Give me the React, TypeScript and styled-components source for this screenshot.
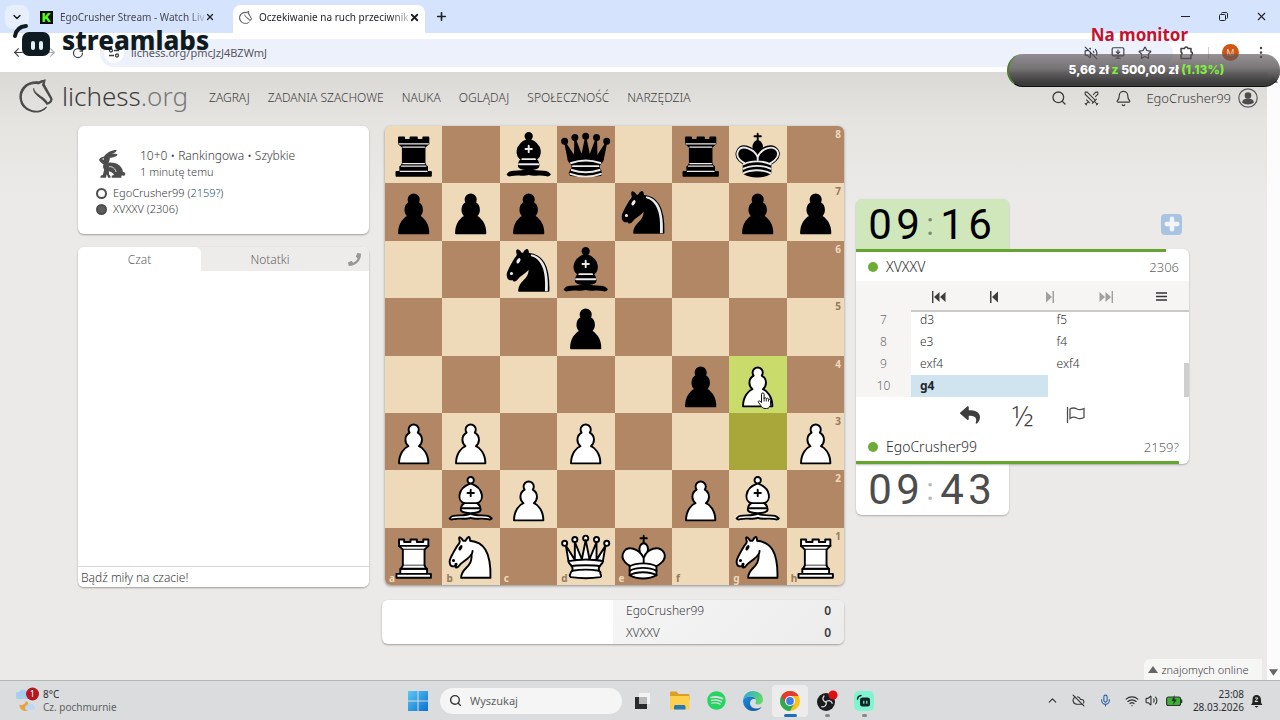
import React from 'react';
import styled, { createGlobalStyle } from 'styled-components';
import { Bell, ChevronDown, ChevronUp, CloudOff, Mic, MonitorDown, Search, Star, Swords, Volume2, VolumeOff, Wifi, X, Plus, ArrowLeft, ArrowRight, RotateCw } from 'lucide-react';
import { FaPhone, FaReply, FaSpotify } from 'react-icons/fa';

const Global = createGlobalStyle`
  * { box-sizing: border-box; }
  body { margin: 0; font-family: 'Noto Sans', sans-serif; font-size: 12px; font-weight: 300; color: #3d3d3d; }
  button { border: 0; padding: 0; background: none; color: inherit; font: inherit; display: flex; align-items: center; justify-content: center; }
  a { color: inherit; text-decoration: none; }
  svg { display: block; flex: none; }
`;

const Screen = styled.div`
  position: relative;
  min-height: 100vh;
  display: flex;
  flex-direction: column;
  overflow: hidden;
`;

/* ---------- browser ---------- */
const TabStrip = styled.div`
  height: 33px;
  display: flex;
  align-items: flex-end;
  padding-left: 5px;
  background: #d6e3fc;
  color: #1f2024;
`;
const TabSearch = styled.button`
  width: 24px;
  height: 24px;
  margin-bottom: 4px;
  border-radius: 8px;
  background: #e7effd;
`;
const Tab = styled.div<{ $active?: boolean }>`
  display: flex;
  align-items: center;
  width: ${p => (p.$active ? 192 : 194)}px;
  height: 28px;
  padding: 0 8px 4px ${p => (p.$active ? 6 : 11)}px;
  margin-left: ${p => (p.$active ? 10 : 0)}px;
  border-radius: 8px 8px 0 0;
  background: ${p => (p.$active ? '#fff' : 'transparent')};
`;
const TabTitle = styled.span<{ $active?: boolean }>`
  flex: 1;
  margin-left: 7px;
  white-space: nowrap;
  font-size: 10px;
  font-weight: 400;
  line-height: 16px;
  color: ${p => (p.$active ? '#1f2024' : '#44474e')};
  mask-image: linear-gradient(90deg, #000 88%, #0003);
`;
const KickMark = styled.span`
  width: 13px;
  height: 13px;
  background: #0a0a0a;
  color: #53fc18;
  font: 900 12px/13px Inter, sans-serif;
  text-align: center;
`;
const NewTab = styled.button`
  width: 32px;
  height: 33px;
`;
const WindowButtons = styled.div`
  display: flex;
  margin-left: auto;
  height: 33px;
  button { width: 38px; }
`;
const Toolbar = styled.div`
  height: 39px;
  display: flex;
  align-items: center;
  padding: 0 6px 0 8px;
  background: #fff;
  color: #3c3f44;
`;
const NavButton = styled.button<{ $dim?: boolean }>`
  width: 20px;
  height: 24px;
  margin-right: ${p => (p.$dim ? 8 : 12)}px;
  color: ${p => (p.$dim ? '#a9abb0' : '#3c3f44')};
`;
const AddressBar = styled.label`
  flex: 1;
  display: flex;
  align-items: center;
  height: 28px;
  padding: 0 15px 0 4px;
  border-radius: 14px;
  background: #edf1fb;
`;
const SiteInfo = styled.button`
  width: 20px;
  height: 20px;
  border-radius: 50%;
  background: #fff;
`;
const Url = styled.input`
  flex: 1;
  border: 0;
  outline: 0;
  padding: 0 0 0 7px;
  background: none;
  font: 11px/16px 'Noto Sans', sans-serif;
  color: #55575c;
`;
const BarIcon = styled.button`
  width: 27px;
  height: 24px;
`;
const ToolDivider = styled.span`
  width: 1px;
  height: 12px;
  margin: 0 13px 0 8px;
  background: #c9cfdb;
`;
const Avatar = styled.button`
  width: 17px;
  height: 17px;
  margin-right: 8px;
  border-radius: 50%;
  background: #cf5613;
  color: #fff;
  font-size: 9px;
`;

/* ---------- stream overlays ---------- */
const StreamlabsMark = styled.div`
  position: absolute;
  left: 12px;
  top: 22px;
  display: flex;
  align-items: center;
  gap: 11px;
  color: #101b21;
  font-size: 26px;
  font-weight: 800;
  line-height: 36px;
`;
const GoalTitle = styled.div`
  position: absolute;
  right: 92px;
  top: 24px;
  color: #c4122f;
  font-size: 17px;
  font-weight: 700;
  line-height: 22px;
`;
const GoalBar = styled.div`
  position: absolute;
  right: 0;
  top: 54px;
  width: 273px;
  height: 33px;
  padding-left: 4px;
  border-radius: 16px;
  border-left: 2px solid #4f7f2a;
  border-bottom: 1px solid #111;
  background: linear-gradient(#5a5054a0, #5f5b5cd0 40%, #3b3b3b 90%);
  color: #fff;
  font: 800 12px/32px Inter, sans-serif;
  text-align: center;
  em { font-style: normal; color: #80f03c; }
`;

/* ---------- lichess page ---------- */
const Viewport = styled.div`
  flex: 1;
  display: flex;
`;
const Page = styled.div`
  position: relative;
  flex: 1;
  background: linear-gradient(#dbd9d5, #e5e4e1 50px, #ebeae8 130px, #ebeae8);
`;
const ScrollTrack = styled.div`
  width: 13px;
  padding: 4px 2px;
  display: flex;
  flex-direction: column;
  justify-content: space-between;
  align-items: center;
  background: #fcfcfc;
`;
const SiteHeader = styled.header`
  height: 54px;
  padding: 0 9px 2px 19px;
  display: flex;
  align-items: center;
`;
const Brand = styled.a`
  display: flex;
  align-items: center;
  gap: 9px;
  width: 190px;
  padding-bottom: 4px;
  color: #3d3d3d;
  font-size: 26px;
  line-height: 36px;
  span { color: #777; }
`;
const SiteNav = styled.nav`
  display: flex;
  gap: 18px;
  font-size: 12px;
  line-height: 20px;
`;
const UserTools = styled.div`
  display: flex;
  align-items: center;
  margin-left: auto;
  button { width: 32px; height: 24px; }
`;
const UserLink = styled.a`
  display: flex;
  align-items: center;
  gap: 7px;
  margin-left: 7px;
  line-height: 20px;
  font-size: 13px;
`;
const Round = styled.main`
  display: flex;
  align-items: flex-start;
  padding: 0 78px 36px;
`;
const Side = styled.aside`
  flex: 291 1 0;
  min-width: 0;
  display: flex;
  flex-direction: column;
  gap: 13px;
`;
const BoardColumn = styled.section`
  flex: 459 1 0;
  min-width: 0;
  margin: 0 12px 0 16px;
`;
const Table = styled.section`
  flex: 333 1 0;
  min-width: 0;
  margin-top: 73px;
`;
const Card = styled.div`
  background: #fff;
  border-radius: 6px;
  box-shadow: 0 1px 2px #0005;
`;
const GameMeta = styled(Card)`
  height: 108px;
  padding: 19px 20px 0 18px;
`;
const GameHead = styled.div`
  display: flex;
  align-items: center;
  gap: 14px;
  height: 37px;
  padding-left: 3px;
  line-height: 16px;
  font-size: 12px;
`;
const HeadLines = styled.div`
  display: flex;
  flex-direction: column;
  small { font-size: 11px; }
`;
const MetaPlayer = styled.div`
  display: flex;
  align-items: center;
  gap: 6px;
  line-height: 16px;
  font-size: 11px;
  a { color: #1f5676; }
`;
const ColorDot = styled.i<{ $filled?: boolean }>`
  width: 11px;
  height: 11px;
  border-radius: 50%;
  border: 2px solid #4d4d4d;
  background: ${p => (p.$filled ? '#5d5d5d' : '#fff')};
`;
const MetaPlayers = styled.div`
  padding-top: 3px;
`;
const Chat = styled(Card)`
  height: 340px;
  display: flex;
  flex-direction: column;
  overflow: hidden;
`;
const ChatTabs = styled.div`
  display: flex;
  height: 24px;
  background: #edecea;
  color: #666;
`;
const ChatTab = styled.button<{ $active?: boolean }>`
  flex: ${p => (p.$active ? 123 : 138)} 1 0;
  border-radius: 6px 6px 0 0;
  background: ${p => (p.$active ? '#fff' : 'transparent')};
`;
const CallButton = styled.button`
  width: 30px;
  color: #989898;
`;
const ChatLog = styled.div`
  flex: 1;
`;
const ChatInput = styled.input`
  height: 21px;
  border: 0;
  border-top: 1px solid #d9d9d9;
  padding: 0 3px;
  background: #fff;
  font: 300 12px/18px 'Noto Sans', sans-serif;
  &::placeholder { color: #3d3d3d; opacity: 1; }
`;

const Board = styled.div`
  position: relative;
  aspect-ratio: 1;
  display: grid;
  grid-template: repeat(8, 1fr) / repeat(8, 1fr);
  border-radius: 6px;
  overflow: hidden;
  box-shadow: 0 1px 3px #0006;
`;
const Square = styled.div<{ $bg: string; $ink: string }>`
  position: relative;
  min-width: 0;
  min-height: 0;
  background: ${p => p.$bg};
  color: ${p => p.$ink};
  font-size: 10px;
  font-weight: 700;
  line-height: 12px;
  > svg { width: 100%; height: 100%; }
`;
const Rank = styled.span`
  position: absolute;
  top: 2px;
  right: 3px;
`;
const FileLetter = styled.span`
  position: absolute;
  bottom: 1px;
  left: 4px;
`;
const HandCursor = styled.svg`
  position: absolute;
  left: 81%;
  top: 58%;
`;
const Crosstable = styled(Card)`
  display: flex;
  height: 44px;
  margin: 15px 0 0 -3px;
  overflow: hidden;
`;
const Score = styled.table`
  width: 50%;
  margin-left: auto;
  border-collapse: collapse;
  background: linear-gradient(135deg, #f5f5f5, #ececec);
  font-size: 12px;
  line-height: 20px;
  th { padding: 0 13px; font-weight: 300; text-align: left; }
  td { padding: 0 13px; font-weight: 600; text-align: right; }
`;

const ClockRow = styled.div`
  display: flex;
  justify-content: space-between;
  align-items: center;
  padding-right: 7px;
`;
const Clock = styled.div<{ $running?: boolean }>`
  width: 153px;
  height: ${p => (p.$running ? 50 : 51)}px;
  padding-left: 10px;
  display: flex;
  border-radius: ${p => (p.$running ? '6px 6px 0 0' : '0 0 6px 6px')};
  background: ${p => (p.$running ? '#d0e7bb' : '#fff')};
  box-shadow: 0 1px 2px #0004;
  color: ${p => (p.$running ? '#000' : '#4d4d4d')};
  font: 42px/51px Roboto, sans-serif;
`;
const Digit = styled.span`
  width: 28px;
  text-align: center;
`;
const Colon = styled.span`
  width: 16px;
  text-align: center;
  opacity: 0.4;
  font-size: 32px;
`;
const MoreTime = styled.button`
  width: 21px;
  height: 21px;
  border-radius: 4px;
  background: #a9c4e2;
  color: #f2f6fb;
`;
const PlayCard = styled.div`
  position: relative;
  background: #fff;
  border-radius: 0 6px 6px 0;
  box-shadow: 0 1px 2px #0004;
`;
const TimeBar = styled.div<{ $pct: number }>`
  width: ${p => p.$pct}%;
  height: 3px;
  background: #65a52f;
`;
const PlayerRow = styled.div`
  display: flex;
  align-items: center;
  gap: 8px;
  height: 29px;
  padding: 0 10px 0 12px;
  font-size: 14px;
  line-height: 20px;
  color: #2c2c2c;
  i { width: 10px; height: 10px; border-radius: 50%; background: #6aac35; }
  span { margin-left: auto; font-size: 13px; color: #666; }
`;
const MoveNav = styled.div`
  display: flex;
  height: 31px;
  padding-left: 55px;
  background: #f6f5f4;
`;
const NavInner = styled.div`
  flex: 1;
  display: flex;
  border-bottom: 2px solid #c8c8c8;
  button { flex: 1; padding-top: 2px; }
  button:disabled { color: #a0a0a0; }
`;
const MoveScroll = styled.div`
  height: 85px;
  display: flex;
  flex-direction: column;
  justify-content: flex-end;
  overflow: hidden;
  position: relative;
`;
const Thumb = styled.div`
  position: absolute;
  right: 0;
  bottom: 0;
  width: 5px;
  height: 34px;
  background: #cfcfcf;
`;
const Moves = styled.table`
  width: calc(100% - 5px);
  table-layout: fixed;
  border-collapse: collapse;
  font-size: 12px;
  line-height: 22px;
  th { width: 55px; padding: 0; background: #f6f5f4; color: #6c6c6c; font-weight: 300; }
  td { padding: 0 9px; height: 22px; }
`;
const Move = styled.td<{ $current?: boolean }>`
  background: ${p => (p.$current ? '#d0e4f0' : 'transparent')};
  color: ${p => (p.$current ? '#22262a' : '#333')};
  font-weight: ${p => (p.$current ? 700 : 300)};
`;
const GameActions = styled.div`
  display: flex;
  justify-content: center;
  height: 35px;
  button { width: 53px; font-size: 28px; line-height: 34px; }
`;
const Friends = styled.button`
  position: absolute;
  right: 5px;
  bottom: 0;
  width: 118px;
  height: 21px;
  gap: 3px;
  padding-right: 9px;
  border-radius: 6px 0 0 0;
  background: #f6f6f5;
  font-size: 11px;
  line-height: 16px;
`;

/* ---------- taskbar ---------- */
const Taskbar = styled.footer`
  height: 40px;
  display: grid;
  grid-template-columns: 1fr auto 1fr;
  align-items: center;
  border-top: 1px solid #b3b7b9;
  background: #dadcdd;
  color: #2d2f31;
  font-size: 10px;
  font-weight: 400;
  line-height: 13px;
`;
const Weather = styled.div`
  display: flex;
  align-items: center;
  gap: 4px;
  padding-left: 16px;
  div { display: flex; flex-direction: column; }
  small { font-size: 10px; color: #606264; }
`;
const WeatherBadge = styled.span`
  position: relative;
  b { position: absolute; right: 4px; top: 1px; color: #fff; font-size: 9px; font-weight: 400; line-height: 12px; }
`;
const Apps = styled.div`
  display: flex;
  align-items: center;
  gap: 1px;
  padding-left: 2px;
`;
const AppButton = styled.button<{ $open?: boolean; $active?: boolean }>`
  position: relative;
  width: 36px;
  height: 32px;
  background: ${p => (p.$active ? '#ebeceb' : 'transparent')};
  border-radius: 4px;
  &::after {
    content: '';
    position: absolute;
    bottom: 0;
    width: ${p => (p.$active ? 13 : p.$open ? 5 : 0)}px;
    height: 3px;
    border-radius: 2px;
    background: ${p => (p.$active ? '#1f6fb5' : '#86888a')};
  }
`;
const SearchBox = styled.label`
  display: flex;
  align-items: center;
  gap: 8px;
  width: 182px;
  height: 26px;
  margin: 0 1px 0 3px;
  padding: 0 9px;
  border-radius: 13px;
  background: #f5f5f5;
  input { width: 120px; border: 0; outline: 0; padding: 0; background: none; font: 11px/16px 'Noto Sans', sans-serif; }
  input::placeholder { color: #606264; opacity: 1; }
`;
const Tray = styled.div`
  display: flex;
  align-items: center;
  justify-content: flex-end;
  padding-right: 17px;
`;
const TrayIcon = styled.button<{ $w: number }>`
  width: ${p => p.$w}px;
  height: 24px;
`;
const DateTime = styled.div`
  width: 53px;
  text-align: right;
  margin-right: 6px;
`;

/* ---------- chess pieces ---------- */
const BISHOP = [
  'M9 36c3.39-.97 10.11.43 13.5-2 3.39 2.43 10.11 1.03 13.5 2 0 0 1.65.54 3 2-.68.97-1.65.99-3 .5-3.39-.97-10.11.46-13.5-1-3.39 1.46-10.11.03-13.5 1-1.354.49-2.323.47-3-.5 1.354-1.94 3-2 3-2z',
  'M15 32c2.5 2.5 12.5 2.5 15 0 .5-1.5 0-2 0-2 0-2.5-2.5-4-2.5-4 5.5-1.5 6-11.5-5-15.5-11 4-10.5 14-5 15.5 0 0-2.5 1.5-2.5 4 0 0-.5.5 0 2z',
  'M25 8a2.5 2.5 0 1 1-5 0 2.5 2.5 0 1 1 5 0z',
];
const PAWN = 'M22.5 9c-2.21 0-4 1.79-4 4 0 .89.29 1.71.78 2.38C17.33 16.5 16 18.59 16 21c0 2.03.94 3.84 2.41 5.03-3 1.06-7.41 5.55-7.41 13.47h23c0-7.92-4.41-12.41-7.41-13.47 1.47-1.19 2.41-3 2.41-5.03 0-2.41-1.33-4.5-3.28-5.62.49-.67.78-1.49.78-2.38 0-2.21-1.79-4-4-4z';
const QUEEN_BASE = 'M9 26c0 2 1.5 2 2.5 4 1 1.5 1 1 .5 3.5-1.5 1-1.5 2.5-1.5 2.5-1.5 1.5.5 2.5.5 2.5 6.5 1 16.5 1 23 0 0 0 1.5-1 0-2.5 0 0 .5-1.5-1-2.5-.5-2.5-.5-2 .5-3.5 1-2 2.5-2 2.5-4-8.5-1.5-18.5-1.5-27 0z';
const QUEEN_BALLS = [[6, 12], [14, 9], [22.5, 8], [31, 9], [39, 12]];

function Piece({ code }: { code: string }) {
  const black = code === code.toLowerCase();
  const detail = black ? '#ececec' : '#000';
  let art: React.ReactNode = null;
  switch (code.toLowerCase()) {
    case 'p':
      art = <path d={PAWN} />;
      break;
    case 'n':
      art = (
        <>
          <path d="M22 10c10.5 1 16.5 8 16 29H15c0-9 10-6.5 8-21" />
          <path d="M24 18c.38 2.91-5.55 7.37-8 9-3 2-2.82 4.34-5 4-1.042-.94 1.41-3.04 0-3-1 0 .19 1.23-1 2-1 0-4.003 1-4-4 0-2 6-12 6-12s1.89-1.9 2-3.5c-.73-.994-.5-2-.5-3 1-1 3 2.5 3 2.5h2s.78-1.992 2.5-3c1 0 1 3 1 3" />
          <path d="M9.5 25.5a.5.5 0 1 1-1 0 .5.5 0 1 1 1 0zM14.933 15.75a.5 1.5 30 1 1-.866-.5.5 1.5 30 1 1 .866.5z" fill={detail} stroke={detail} />
          {black && <path d="M24.55 10.4l-.45 1.45.5.15c3.15 1 5.65 2.49 7.9 6.75S35.75 29.06 35.25 39l-.05.5h2.25l.05-.5c.5-10.06-.88-16.85-3.25-21.34-2.37-4.49-5.79-6.64-9.19-7.16l-.51-.1z" fill={detail} stroke="none" />}
        </>
      );
      break;
    case 'b':
      art = (
        <>
          {BISHOP.map(d => <path key={d} d={d} />)}
          <path d="M17.5 26h10M15 30h15m-7.5-14.5v5M20 18h5" fill="none" stroke={detail} />
        </>
      );
      break;
    case 'r':
      art = black ? (
        <>
          <path d="M9 39h27v-3H9v3zM12.5 32l1.5-2.5h17l1.5 2.5h-20zM12 36v-4h21v4H12zM14 29.5v-13h17v13H14zM14 16.5L11 14h23l-3 2.5H14zM11 14V9h4v2h5V9h5v2h5V9h4v5H11z" />
          <path d="M12 35.5h21M13 31.5h19M14 29.5h17M14 16.5h17M11 14h23" fill="none" stroke={detail} strokeWidth="1" />
        </>
      ) : (
        <>
          <path d="M9 39h27v-3H9v3zM12 36v-4h21v4H12zM11 14V9h4v2h5V9h5v2h5V9h4v5" />
          <path d="M34 14l-3 3H14l-3-3" />
          <path d="M31 17v12.5H14V17" />
          <path d="M31 29.5l1.5 2.5h-20l1.5-2.5" />
          <path d="M11 14h23" />
        </>
      );
      break;
    case 'q':
      art = (
        <>
          {QUEEN_BALLS.map(([cx, cy]) => <circle key={cx} cx={cx} cy={cy} r={2} />)}
          <path d={black ? 'M9 26c8.5-1.5 21-1.5 27 0l2.5-12.5L31 25l-.3-14.1-5.2 13.6-3-14.5-3 14.5-5.2-13.6L14 25 6.5 13.5 9 26z' : 'M9 26c8.5-1.5 21-1.5 27 0l2-12-7 11V11l-5.5 13.5-3-15-3 15L14 11v14L7 14l2 12z'} />
          <path d={QUEEN_BASE} />
          <path d={black ? 'M11 29a35 35 1 0 1 23 0M12.5 31.5h20M11.5 34.5a35 35 1 0 0 22 0M10.5 37.5a35 35 1 0 0 24 0' : 'M11.5 30c3.5-1 18.5-1 22 0M12 33.5c6-1 15-1 21 0'} fill="none" stroke={detail} />
        </>
      );
      break;
    case 'k':
      art = (
        <>
          <path d="M22.5 11.63V6M20 8h5" />
          <path d="M22.5 25s4.5-7.5 3-10.5c0 0-1-2.5-3-2.5s-3 2.5-3 2.5c-1.5 3 3 10.5 3 10.5" />
          <path d="M11.5 37c5.5 3.5 15.5 3.5 21 0v-7s9-4.5 6-10.5c-4-6.5-13.5-3.5-16 4V27v-3.5c-3.5-7.5-13-10.5-16-4-3 6 5 10 5 10V37z" />
          {black && <path d="M32 29.5s8.5-4 6.03-9.65C34.15 14 25 18 22.5 24.5l.01 2.1-.01-2.1C20 18 9.906 14 6.997 19.85c-2.497 5.65 4.853 9 4.853 9" fill="none" stroke={detail} />}
          <path d="M11.5 30c5.5-3 15.5-3 21 0m-21 3.5c5.5-3 15.5-3 21 0m-21 3.5c5.5-3 15.5-3 21 0" fill="none" stroke={detail} />
        </>
      );
      break;
  }
  return (
    <svg viewBox="0 0 45 45" fill={black ? '#000' : '#fff'} stroke="#000" strokeWidth="1.5" strokeLinecap="round" strokeLinejoin="round">
      {art}
    </svg>
  );
}

const POSITION = [
  'r.bq.rk.',
  'ppp.n.pp',
  '..nb....',
  '...p....',
  '.....pP.',
  'PP.P...P',
  '.BP..PB.',
  'RN.QK.NR',
];
const LIGHT = '#eed9b8';
const DARK = '#b18765';

function squareColor(r: number, c: number) {
  if (r === 4 && c === 6) return '#c9db6b';
  if (r === 5 && c === 6) return '#a9a63a';
  return (r + c) % 2 ? DARK : LIGHT;
}

function ChessBoard() {
  return (
    <Board>
      {POSITION.flatMap((row, r) =>
        [...row].map((code, c) => (
          <Square key={`${r}${c}`} $bg={squareColor(r, c)} $ink={(r + c) % 2 ? LIGHT : '#977a58'}>
            {code !== '.' && <Piece code={code} />}
            {c === 7 && <Rank>{8 - r}</Rank>}
            {r === 7 && <FileLetter>{'abcdefgh'[c]}</FileLetter>}
          </Square>
        )),
      )}
      <HandCursor width="15" height="18" viewBox="0 0 15 18">
        <path d="M4.5 10.500V2.300a1.300 1.300 0 0 1 2.600 0V7l.2-.8a1.100 1.100 0 0 1 2 .5l.4-.2a1.100 1.100 0 0 1 1.800.8l.5-.1c.9-.1 1.500.5 1.500 1.300v3.500c0 2.500-1.500 4.500-4 4.500H8c-1.800 0-2.800-1-3.600-2.200L1.400 10.400c-.7-1 .6-2 1.500-1.300z" fill="#fff" stroke="#111" strokeWidth="1" strokeLinejoin="round" />
        <path d="M7.100 7v2.500M9.300 7v2.500M11.500 7.500v2" stroke="#111" strokeWidth=".9" />
      </HandCursor>
    </Board>
  );
}

/* ---------- drawings ---------- */
const KNIGHT = 'M38.956.5c-3.53.418-6.452.902-9.286 2.984C5.534 1.786-.692 18.533.68 29.364 3.493 50.214 31.918 55.785 41.329 41.7c-7.444 7.696-19.276 8.752-28.323 3.084C3.959 39.116-.506 27.392 4.683 17.567 9.873 7.742 18.996 4.535 29.03 6.405c2.43-1.418 5.225-3.22 7.655-3.187l-1.694 4.86 12.752 21.37c-.439 5.654-5.459 6.112-5.459 6.112-.574-1.47-1.634-2.942-4.842-6.036-3.207-3.094-17.465-10.177-15.788-16.207-2.001 6.967 10.311 14.152 14.04 17.663 3.73 3.51 5.426 6.04 5.795 6.756 0 0 9.392-2.504 7.838-8.927L37.4 7.171z';

const KnightLogo = ({ size }: { size: number }) => (
  <svg width={size} height={size} viewBox="-1 -1 52 52" fill="#4a4a4a" stroke="#4a4a4a" strokeWidth="1.6">
    <path d={KNIGHT} />
  </svg>
);

const Rabbit = () => (
  <svg width="27" height="28" viewBox="0 0 80 84" fill="#4d4d4d">
    <path d="M14 20C22 8 38 0 52 0c2 4-6 9-16 13 8-2 17-2 19 1-3 6-14 9-23 9 0 7-2 11-4 15 12-1 26 1 34 9 7 7 9 13 9 19 5-1 9 4 7 8-2 4-7 4-10 2l-2 7H38c-2-5 1-8 7-8-4-6-9-10-16-11l1 10c3 1 5 4 4 9h-7l-4-10-3 10H4c-1-5 2-7 7-8l4-16c-4-5-4-11-2-16C6 38 0 34 0 29c1-5 7-9 14-9z" />
    <path d="M30 50c10-1 18 6 21 16" fill="none" stroke="#fff" strokeWidth="2.500" />
    <circle cx="12" cy="27" r="2.500" fill="#fff" />
  </svg>
);

const StreamlabsBot = () => (
  <svg width="39" height="34" viewBox="0 0 39 34">
    <path d="M3 13C4 7 8 3.500 14 3" fill="none" stroke="#101b21" strokeWidth="4" strokeLinecap="round" />
    <rect x="10" y="9" width="28" height="24" rx="7" fill="#101b21" />
    <rect x="19" y="18" width="4" height="9" rx="2" fill="#dff1f5" />
    <rect x="27" y="18" width="4" height="9" rx="2" fill="#dff1f5" />
  </svg>
);

const Jump = ({ double, flip }: { double?: boolean; flip?: boolean }) => (
  <svg width="14" height="12" viewBox="0 0 14 12" fill="currentColor">
    <g transform={flip ? 'translate(14 0) scale(-1 1)' : undefined}>
      {double ? <path d="M0 0h1.400v12H0zM7.500 1v10L2 6zM13.500 1v10L8 6z" /> : <path d="M3 0h1.500v12H3zM11 .5v11L5 6z" />}
    </g>
  </svg>
);

const Flag = () => (
  <svg width="20" height="18" viewBox="0 0 20 18" fill="none" stroke="#4d4d4d" strokeWidth="1.300">
    <path d="M1.500 1v16M4 3c3-2 5-1 7 0s4 1 7-.5v9c-3 1.500-5 1.500-7 .5s-4-1.500-7 .5z" />
  </svg>
);

const UserIcon = () => (
  <svg width="20" height="20" viewBox="0 0 20 20">
    <circle cx="10" cy="10" r="9.200" fill="none" stroke="#5a5a5a" strokeWidth="1.200" />
    <circle cx="10" cy="7.500" r="3.300" fill="#4d4d4d" />
    <path d="M4 14.500c.5-3 2.500-4 6-4s5.500 1 6 4c-3 2.500-9 2.500-12 0z" fill="#4d4d4d" />
  </svg>
);

const Extension = () => (
  <svg width="15" height="15" viewBox="0 0 15 15" fill="none" stroke="#3c3f44" strokeWidth="1.500" strokeLinejoin="round">
    <path d="M2 3.500h3.500a1.800 1.800 0 0 1 3.500 0h3V7a1.500 1.500 0 0 1 0 3v3.500H2V10a1.600 1.600 0 0 0 0-3z" />
  </svg>
);

const SiteControls = () => (
  <svg width="12" height="12" viewBox="0 0 12 12" fill="none" stroke="#3c3f44" strokeWidth="1.300">
    <circle cx="3" cy="3.500" r="1.500" />
    <circle cx="9" cy="8.500" r="1.500" />
    <path d="M6 3.500h5M1 8.500h5" />
  </svg>
);

const Triangle = ({ down, w = 10 }: { down?: boolean; w?: number }) => (
  <svg width={w} height="7" viewBox="0 0 10 7" fill="#666">
    <path d={down ? 'M0 0h10L5 7z' : 'M0 7h10L5 0z'} />
  </svg>
);

const WeatherIcon = () => (
  <svg width="23" height="27" viewBox="0 0 23 27">
    <path d="M2 12a3.500 3.500 0 0 1 1-7 5 5 0 0 1 9 1v6z" fill="#a9cdf0" />
    <path d="M3 18c2 1 6 0 7-4 4 2 5 10-1 10-3 0-5-3-6-6z" fill="#eba13a" />
    <path d="M10 23a3 3 0 0 1 1-5 4 4 0 0 1 7 1 2.500 2.500 0 0 1 0 4z" fill="#bcd8f4" />
    <circle cx="16.500" cy="7" r="6.500" fill="#b3191f" />
  </svg>
);

const WindowsLogo = () => (
  <svg width="20" height="20" viewBox="0 0 20 20">
    <defs>
      <linearGradient id="win" x1="0" y1="0" x2="1" y2="1">
        <stop offset="0" stopColor="#5cc8f5" />
        <stop offset="1" stopColor="#0a6fd0" />
      </linearGradient>
    </defs>
    <path d="M0 0h9.500v9.500H0zM10.500 0H20v9.500h-9.500zM0 10.500h9.500V20H0zM10.500 10.500H20V20h-9.500z" fill="url(#win)" />
  </svg>
);
const TaskView = () => (
  <svg width="17" height="18" viewBox="0 0 17 18">
    <path d="M1 5h12v12H1z" fill="#2b2b2b" />
    <path d="M5 1h11v11H5z" fill="#f3f3f3" />
    <path d="M5 5h8v7H5z" fill="#b9b9b9" />
  </svg>
);
const Folder = () => (
  <svg width="21" height="19" viewBox="0 0 21 19">
    <path d="M1 2c0-1 .5-1.500 1.500-1.500h5L9.500 3H19c1 0 1.500.5 1.500 1.500V9H1z" fill="#dc9e25" />
    <path d="M1 5h19.500v12c0 1-.5 1.500-1.500 1.500H2.500C1.500 18.500 1 18 1 17z" fill="#fccf4d" />
    <path d="M5 18.500V16c0-1.500 1-2 2-2h7.500c1 0 2 .5 2 2v2.500z" fill="#2478b8" />
  </svg>
);
const Edge = () => (
  <svg width="20" height="20" viewBox="0 0 20 20">
    <defs>
      <linearGradient id="edgeTop" x1="0" y1="0" x2="1" y2=".4">
        <stop offset="0" stopColor="#2aa7e0" />
        <stop offset="1" stopColor="#5fd86a" />
      </linearGradient>
      <linearGradient id="edgeBody" x1="0" y1="0" x2="1" y2="1">
        <stop offset="0" stopColor="#1e8fdd" />
        <stop offset="1" stopColor="#134f9c" />
      </linearGradient>
    </defs>
    <path d="M0 9.500C.5 4 4.500 0 10 0c6 0 10 4 10 8.500 0 3.500-2.500 5-5 5-2 0-3-.8-2.500-1.700.4-.6.5-1 .5-1.800C13 7.500 11 5.500 7.500 5.500 3.500 5.500.7 7.500 0 9.500z" fill="url(#edgeTop)" />
    <path d="M0 9.500c.7-2 3.500-4 7.500-4 2.500 0 4.500 1.200 5.200 3C9.500 7 7 9 7 12c0 4 4 6 7.500 5.500 2-.3 3.500-1.200 4-1.500-1.500 2.500-4.500 4-8.500 4C4.500 20 0 15.500 0 9.500z" fill="url(#edgeBody)" />
  </svg>
);
const Chrome = () => (
  <svg width="20" height="20" viewBox="0 0 20 20">
    <circle cx="10" cy="10" r="10" fill="#fbc116" />
    <path d="M10 10 1.340 5A10 10 0 0 0 10 20l4.330-7.500z" fill="#2da94f" />
    <path d="M1.340 5A10 10 0 0 1 18.660 5H10L5.670 12.500z" fill="#e33b2e" />
    <circle cx="10" cy="10" r="5" fill="#fff" />
    <circle cx="10" cy="10" r="3.900" fill="#3b7de9" />
  </svg>
);
const Obs = () => (
  <svg width="24" height="22" viewBox="0 0 24 22">
    <circle cx="11" cy="12" r="9" fill="#1a1b1e" />
    <g fill="none" stroke="#d8dadb" strokeWidth="1.300" strokeLinecap="round">
      <path id="blade" d="M11 12c-3-.5-4-3.500-2-6" />
      <path d="M11 12c-3-.5-4-3.500-2-6" transform="rotate(120 11 12)" />
      <path d="M11 12c-3-.5-4-3.500-2-6" transform="rotate(240 11 12)" />
    </g>
    <circle cx="18" cy="5" r="4.600" fill="#e00f15" />
  </svg>
);
const StreamApp = () => (
  <svg width="20" height="20" viewBox="0 0 20 20">
    <rect width="20" height="20" rx="5" fill="#7ff5cf" />
    <path d="M3.500 8c.3-2 1.500-3.300 3.500-3.500" fill="none" stroke="#10252a" strokeWidth="1.500" strokeLinecap="round" />
    <rect x="6" y="6.500" width="10" height="9" rx="2.500" fill="#10252a" />
    <path d="M9.800 9.800v3M12.800 9.800v3" stroke="#7ff5cf" strokeWidth="1.200" />
  </svg>
);
const Battery = () => (
  <svg width="17" height="12" viewBox="0 0 17 12">
    <rect x=".6" y="2" width="14" height="8.500" rx="2" fill="#3fae3a" stroke="#333" strokeWidth="1.100" />
    <path d="M15.500 4.500v3.500" stroke="#333" strokeWidth="1.500" />
    <path d="M8.500 0 5.500 6h2.300L7 10l3.800-5.500H8.500z" fill="#1c3a1c" />
  </svg>
);
const SleepBell = () => (
  <svg width="13" height="14" viewBox="0 0 13 14">
    <path d="M1 11c1.500-1.500 1.500-3 1.500-5.500C2.500 3 4 1 6.500 1S11 3 11 5.500c0 2.500 0 4 1.500 5.500z" fill="#222" />
    <path d="M4.500 12h4l-2 1.800z" fill="#222" />
    <path d="M5 4h3L5 7.500h3" stroke="#dadcdd" fill="none" />
  </svg>
);

const MENU = ['ZAGRAJ', 'ZADANIA SZACHOWE', 'NAUKA', 'OGLĄDAJ', 'SPOŁECZNOŚĆ', 'NARZĘDZIA'];
const MOVES: [number, string, string][] = [
  [7, 'd3', 'f5'],
  [8, 'e3', 'f4'],
  [9, 'exf4', 'exf4'],
  [10, 'g4', ''],
];

function ClockFace({ time, running }: { time: string; running?: boolean }) {
  return (
    <Clock $running={running} role="timer">
      {[...time].map((ch, i) => (ch === ':' ? <Colon key={i}>:</Colon> : <Digit key={i}>{ch}</Digit>))}
    </Clock>
  );
}

function Browser() {
  return (
    <>
      <TabStrip>
        <TabSearch aria-label="Karty"><ChevronDown size={12} strokeWidth={3} /></TabSearch>
        <Tab>
          <KickMark>K</KickMark>
          <TabTitle>EgoCrusher Stream - Watch Liv</TabTitle>
          <button aria-label="Zamknij kartę"><X size={10} strokeWidth={3} /></button>
        </Tab>
        <Tab $active>
          <KnightLogo size={13} />
          <TabTitle $active>Oczekiwanie na ruch przeciwnik</TabTitle>
          <button aria-label="Zamknij kartę"><X size={11} strokeWidth={4} /></button>
        </Tab>
        <NewTab aria-label="Nowa karta"><Plus size={13} strokeWidth={3} /></NewTab>
        <WindowButtons>
          <button aria-label="Minimalizuj"><svg width="9" height="9"><path d="M0 4.500h9" stroke="#222" /></svg></button>
          <button aria-label="Przywróć">
            <svg width="9" height="9" viewBox="0 0 9 9" fill="none" stroke="#222"><rect x=".5" y="2.500" width="6" height="6" rx="1" /><path d="M2.500 1.500c0-.6.4-1 1-1H7c1 0 1.500.5 1.500 1.500v3.500c0 .6-.4 1-1 1" /></svg>
          </button>
          <button aria-label="Zamknij"><X size={13} strokeWidth={2} /></button>
        </WindowButtons>
      </TabStrip>
      <Toolbar>
        <NavButton aria-label="Wstecz"><ArrowLeft size={13} /></NavButton>
        <NavButton $dim aria-label="Dalej"><ArrowRight size={13} /></NavButton>
        <NavButton aria-label="Odśwież"><RotateCw size={12} strokeWidth={2.5} /></NavButton>
        <AddressBar>
          <SiteInfo aria-label="Informacje o witrynie"><SiteControls /></SiteInfo>
          <Url aria-label="Adres" defaultValue="lichess.org/pmcJzJ4BZWmJ" />
          <BarIcon aria-label="Wycisz"><VolumeOff size={14} /></BarIcon>
          <BarIcon aria-label="Zainstaluj"><MonitorDown size={14} /></BarIcon>
          <BarIcon aria-label="Zakładka"><Star size={14} /></BarIcon>
        </AddressBar>
        <BarIcon aria-label="Rozszerzenia"><Extension /></BarIcon>
        <ToolDivider />
        <Avatar>M</Avatar>
        <BarIcon aria-label="Menu">
          <svg width="4" height="13" viewBox="0 0 4 13" fill="#3c3f44"><circle cx="2" cy="2" r="1.200" /><circle cx="2" cy="6.500" r="1.200" /><circle cx="2" cy="11" r="1.200" /></svg>
        </BarIcon>
      </Toolbar>
    </>
  );
}

function RoundTable() {
  return (
    <Table>
      <ClockRow>
        <ClockFace time="09:16" running />
        <MoreTime aria-label="Dodaj czas"><Plus size={18} strokeWidth={6} /></MoreTime>
      </ClockRow>
      <PlayCard>
        <TimeBar $pct={93} />
        <PlayerRow><i /><a href="#xvxxv">XVXXV</a><span>2306</span></PlayerRow>
        <MoveNav>
          <NavInner>
            <button aria-label="Pierwszy"><Jump double /></button>
            <button aria-label="Poprzedni"><Jump /></button>
            <button aria-label="Następny" disabled><Jump flip /></button>
            <button aria-label="Ostatni" disabled><Jump double flip /></button>
            <button aria-label="Menu"><svg width="11" height="9" viewBox="0 0 11 9"><path d="M0 1h11M0 4.500h11M0 8h11" stroke="#333" strokeWidth="1.600" /></svg></button>
          </NavInner>
        </MoveNav>
        <MoveScroll>
          <Moves>
            <tbody>
              {MOVES.map(([n, w, b]) => (
                <tr key={n}>
                  <th scope="row">{n}</th>
                  <Move $current={n === 10}>{w}</Move>
                  <Move>{b}</Move>
                </tr>
              ))}
            </tbody>
          </Moves>
          <Thumb />
        </MoveScroll>
        <GameActions>
          <button aria-label="Cofnij ruch"><FaReply size={20} /></button>
          <button>½</button>
          <button aria-label="Poddaj się"><Flag /></button>
        </GameActions>
        <PlayerRow><i /><a href="#egocrusher">EgoCrusher99</a><span>2159?</span></PlayerRow>
        <TimeBar $pct={97} />
      </PlayCard>
      <ClockFace time="09:43" />
    </Table>
  );
}

export default function App() {
  return (
    <Screen>
      <Global />
      <Browser />
      <Viewport>
        <Page>
          <SiteHeader>
            <Brand href="#home"><KnightLogo size={34} /><div>lichess<span>.org</span></div></Brand>
            <SiteNav>{MENU.map(m => <a key={m} href="#menu">{m}</a>)}</SiteNav>
            <UserTools>
              <button aria-label="Szukaj"><Search size={16} strokeWidth={2} /></button>
              <button aria-label="Wyzwania"><Swords size={17} strokeWidth={1.5} /></button>
              <button aria-label="Powiadomienia"><Bell size={17} strokeWidth={1.7} /></button>
              <UserLink href="#user">EgoCrusher99 <UserIcon /></UserLink>
            </UserTools>
          </SiteHeader>
          <Round>
            <Side>
              <GameMeta>
                <GameHead>
                  <Rabbit />
                  <HeadLines>
                    <span>10+0 • Rankingowa • Szybkie</span>
                    <small>1 minutę temu</small>
                  </HeadLines>
                </GameHead>
                <MetaPlayers>
                  <MetaPlayer><ColorDot /><span>EgoCrusher99 (<a href="#rating">2159?</a>)</span></MetaPlayer>
                  <MetaPlayer><ColorDot $filled /><span>XVXXV (2306)</span></MetaPlayer>
                </MetaPlayers>
              </GameMeta>
              <Chat>
                <ChatTabs>
                  <ChatTab $active>Czat</ChatTab>
                  <ChatTab>Notatki</ChatTab>
                  <CallButton aria-label="Rozmowa"><FaPhone size={13} /></CallButton>
                </ChatTabs>
                <ChatLog />
                <ChatInput aria-label="Wiadomość" placeholder="Bądź miły na czacie!" />
              </Chat>
            </Side>
            <BoardColumn>
              <ChessBoard />
              <Crosstable>
                <Score>
                  <tbody>
                    <tr><th scope="row">EgoCrusher99</th><td>0</td></tr>
                    <tr><th scope="row">XVXXV</th><td>0</td></tr>
                  </tbody>
                </Score>
              </Crosstable>
            </BoardColumn>
            <RoundTable />
          </Round>
          <Friends><Triangle />znajomych online</Friends>
        </Page>
        <ScrollTrack><Triangle w={9} /><Triangle w={9} down /></ScrollTrack>
      </Viewport>
      <Taskbar>
        <Weather>
          <WeatherBadge><WeatherIcon /><b>1</b></WeatherBadge>
          <div><span>8°C</span><small>Cz. pochmurnie</small></div>
        </Weather>
        <Apps>
          <AppButton aria-label="Start"><WindowsLogo /></AppButton>
          <SearchBox><Search size={13} strokeWidth={2.5} /><input aria-label="Wyszukaj" placeholder="Wyszukaj" /></SearchBox>
          <AppButton aria-label="Widok zadań"><TaskView /></AppButton>
          <AppButton aria-label="Pliki"><Folder /></AppButton>
          <AppButton aria-label="Spotify"><FaSpotify size={19} color="#24d562" /></AppButton>
          <AppButton aria-label="Edge"><Edge /></AppButton>
          <AppButton aria-label="Chrome" $active><Chrome /></AppButton>
          <AppButton aria-label="OBS" $open><Obs /></AppButton>
          <AppButton aria-label="Streamlabs" $open><StreamApp /></AppButton>
        </Apps>
        <Tray>
          <TrayIcon $w={26} aria-label="Ukryte ikony"><ChevronUp size={13} /></TrayIcon>
          <TrayIcon $w={27} aria-label="Chmura"><CloudOff size={13} /></TrayIcon>
          <TrayIcon $w={27} aria-label="Mikrofon"><Mic size={13} color="#2b5fa8" /></TrayIcon>
          <TrayIcon $w={26} aria-label="Sieć"><Wifi size={14} /></TrayIcon>
          <TrayIcon $w={12} aria-label="Dźwięk"><Volume2 size={13} /></TrayIcon>
          <TrayIcon $w={34} aria-label="Bateria"><Battery /></TrayIcon>
          <DateTime>23:08<br />28.03.2026</DateTime>
          <SleepBell />
        </Tray>
      </Taskbar>
      <StreamlabsMark><StreamlabsBot />streamlabs</StreamlabsMark>
      <GoalTitle>Na monitor</GoalTitle>
      <GoalBar>5,66 zł <em>z</em> 500,00 zł <em>(1.13%)</em></GoalBar>
    </Screen>
  );
}
